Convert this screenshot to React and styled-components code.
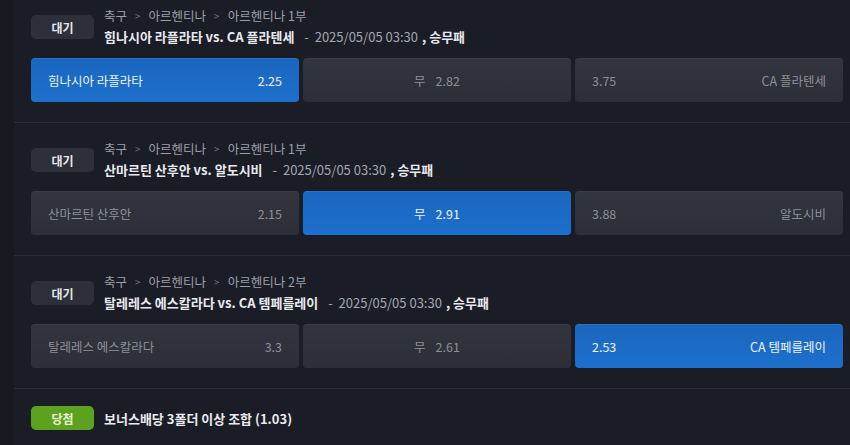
import React from 'react';
import styled, {createGlobalStyle} from 'styled-components';

const GlobalStyle = createGlobalStyle`
  html, body {
    margin: 0;
    padding: 0;
    background: #181a21;
    overflow: hidden;
  }
  body {
    font-family: "Noto Sans CJK KR", "Noto Sans", sans-serif;
  }
`;

const Page = styled.div`
  height: 445px;
  padding-left: 14px;
  background: #181a21;
`;

const Panel = styled.div`
  height: 100%;
  background: #1b1d26;
  overflow: hidden;
`;

const List = styled.div`
  margin-top: -10px;
`;

const Slip = styled.div`
  padding: 16px 7px 20px 17px;
  border-bottom: 1px solid #2a2d37;
  display: flex;
  flex-direction: column;
  gap: 10px;
`;

const Head = styled.div`
  display: flex;
  align-items: center;
  gap: 10px;
  min-height: 42px;
`;

const Badge = styled.div`
  width: 63px;
  height: 24px;
  border-radius: 5px;
  flex-shrink: 0;
  display: flex;
  align-items: center;
  justify-content: center;
  font-size: 12px;
  font-weight: 700;
  color: ${({$win}) => ($win ? '#e8f5d8' : '#e4e6ea')};
  background: ${({$win}) => ($win ? '#5da21f' : '#2d3039')};
`;

const Info = styled.div`
  display: flex;
  flex-direction: column;
  gap: 2px;
`;

const Crumbs = styled.div`
  display: flex;
  align-items: center;
  gap: 8px;
  font-size: 12.5px;
  line-height: 18px;
  color: #9a9fa9;
`;

const Chevron = styled.span`
  font-size: 10px;
  color: #6f737d;
`;

const Title = styled.div`
  font-size: 13px;
  line-height: 20px;
  color: #e8eaee;
  font-weight: 700;
  white-space: nowrap;
`;

const Meta = styled.span`
  font-weight: 400;
  color: #a3a7b0;
  margin: 0 4px 0 10px;
`;

const Odds = styled.div`
  display: grid;
  grid-template-columns: repeat(3, 1fr);
  gap: 4px;
`;

const Pick = styled.div`
  height: 44px;
  border-radius: 4px;
  padding: 0 17px;
  display: flex;
  align-items: center;
  justify-content: ${({$center}) => ($center ? 'center' : 'space-between')};
  gap: ${({$center}) => ($center ? '10px' : '0')};
  font-size: 12.5px;
  color: ${({$on}) => ($on ? '#eef4fb' : '#8c909a')};
  background: ${({$on}) =>
    $on ? 'linear-gradient(180deg, #1a66bf 0%, #1d70cc 100%)' : 'linear-gradient(180deg, #32343e 0%, #2c2e38 100%)'};
  box-shadow: ${({$on}) => ($on ? 'inset 0 1px 0 rgba(255,255,255,0.08)' : 'inset 0 1px 0 rgba(255,255,255,0.04)')};
`;

const BonusText = styled.div`
  font-size: 13px;
  font-weight: 700;
  color: #e8eaee;
`;

const Bonus = styled.div`
  padding: 17px 7px 0 17px;
  display: flex;
  align-items: center;
  gap: 10px;
`;

const slips = [
  {
    league: '아르헨티나 1부',
    home: '힘나시아 라플라타',
    away: 'CA 플라텐세',
    odds: ['2.25', '2.82', '3.75'],
    pick: 0,
  },
  {
    league: '아르헨티나 1부',
    home: '산마르틴 산후안',
    away: '알도시비',
    odds: ['2.15', '2.91', '3.88'],
    pick: 1,
  },
  {
    league: '아르헨티나 2부',
    home: '탈레레스 에스칼라다',
    away: 'CA 템페를레이',
    odds: ['3.3', '2.61', '2.53'],
    pick: 2,
  },
];

const SlipRow = ({league, home, away, odds, pick}) => (
  <Slip>
    <Head>
      <Badge>대기</Badge>
      <Info>
        <Crumbs>
          <span>축구</span>
          <Chevron>&gt;</Chevron>
          <span>아르헨티나</span>
          <Chevron>&gt;</Chevron>
          <span>{league}</span>
        </Crumbs>
        <Title>
          {home} vs. {away}
          <Meta>-&nbsp; 2025/05/05 03:30</Meta>, 승무패
        </Title>
      </Info>
    </Head>
    <Odds>
      <Pick $on={pick === 0}>
        <span>{home}</span>
        <span>{odds[0]}</span>
      </Pick>
      <Pick $on={pick === 1} $center>
        <span>무</span>
        <span>{odds[1]}</span>
      </Pick>
      <Pick $on={pick === 2}>
        <span>{odds[2]}</span>
        <span>{away}</span>
      </Pick>
    </Odds>
  </Slip>
);

const App = () => (
  <Page>
    <GlobalStyle />
    <Panel>
      <List>
        {slips.map((s) => (
          <SlipRow key={s.home} {...s} />
        ))}
        <Bonus>
          <Badge $win>당첨</Badge>
          <BonusText>보너스배당 3폴더 이상 조합 (1.03)</BonusText>
        </Bonus>
      </List>
    </Panel>
  </Page>
);

export default App;
